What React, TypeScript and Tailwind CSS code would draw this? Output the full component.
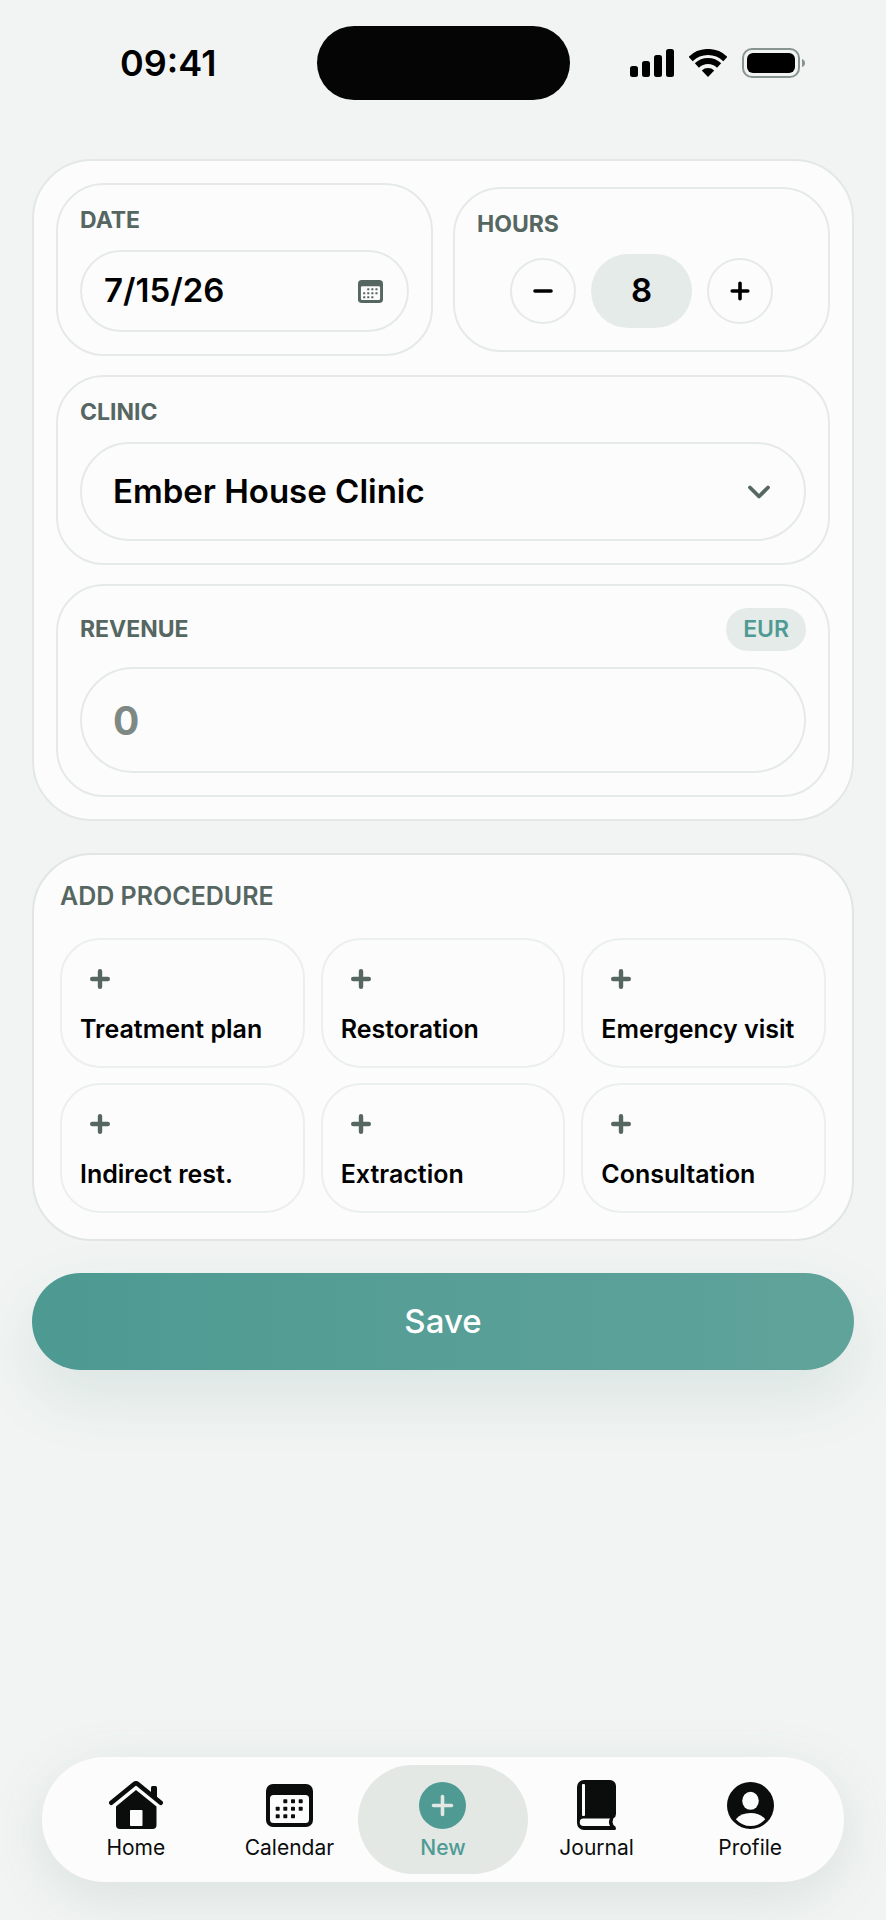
import { useState, type ReactNode } from "react";

const procedures = [
  "Treatment plan",
  "Restoration",
  "Emergency visit",
  "Indirect rest.",
  "Extraction",
  "Consultation",
];

function SignalIcon() {
  return (
    <svg width="44" height="28" viewBox="0 0 44 28" fill="currentColor" aria-hidden="true">
      <rect x="0" y="17" width="8" height="11" rx="2.5" />
      <rect x="12" y="12" width="8" height="16" rx="2.5" />
      <rect x="24" y="6" width="8" height="22" rx="2.5" />
      <rect x="36" y="0" width="8" height="28" rx="2.5" />
    </svg>
  );
}

function WifiIcon() {
  return (
    <svg width="38" height="28" viewBox="0 0 38 28" fill="none" aria-hidden="true">
      <path d="M1.6 10a25 25 0 0 1 34.8 0" stroke="currentColor" strokeWidth="6" />
      <path d="M7.9 16.5a16 16 0 0 1 22.2 0" stroke="currentColor" strokeWidth="6" />
      <path d="M19 28l-6.2-6.4a9 9 0 0 1 12.4 0z" fill="currentColor" />
    </svg>
  );
}

function BatteryIcon() {
  return (
    <svg width="63" height="30" viewBox="0 0 63 30" aria-hidden="true">
      <rect x="1" y="1" width="56" height="28" rx="9" fill="none" stroke="#87948f" strokeWidth="2" />
      <rect x="5" y="5" width="48" height="20" rx="6" fill="currentColor" />
      <path d="M60 11q3 1 3 4t-3 4z" fill="#87948f" />
    </svg>
  );
}

// `heavy` thickens the frame so the icon stays readable at small sizes
function CalendarIcon({ className, heavy = false }: { className?: string; heavy?: boolean }) {
  const dots = [
    [19.3, 17.3], [27, 17.3], [34.7, 17.3],
    [11.7, 24.8], [19.3, 24.8], [27, 24.8], [34.7, 24.8],
    [11.7, 32.3], [19.3, 32.3], [27, 32.3],
  ];
  return (
    <svg viewBox="0 0 47 43" className={className} fill="currentColor" aria-hidden="true">
      <rect width="47" height="43" rx="7" />
      {heavy ? (
        <rect x="5.5" y="11.5" width="36" height="26" rx="2.5" fill="#fcfcfc" />
      ) : (
        <rect x="4" y="11" width="39" height="28" rx="3.5" fill="#fcfcfc" />
      )}
      {dots.map(([x, y]) => (
        <rect key={`${x}-${y}`} x={x - 2} y={y - 2} width="4" height="4" rx="0.8" />
      ))}
    </svg>
  );
}

function HomeIcon() {
  return (
    <svg width="54" height="48" viewBox="0 0 54 48" fill="currentColor" aria-hidden="true">
      <path d="M2.3 21.7L25 3.2q2-1.6 4 0l22.7 18.5" fill="none" stroke="currentColor" strokeWidth="4.6" strokeLinecap="round" />
      <path d="M42 6.5q0-1.5 1.5-1.5h3q1.5 0 1.5 1.5V19l-6-5z" />
      <path d="M27 9l20.5 16.5V44a4 4 0 0 1-4 4H11a4 4 0 0 1-4-4V25.5z" />
      <rect x="21" y="29" width="12.5" height="16" rx="0.8" fill="#fcfcfc" />
    </svg>
  );
}

function NewIcon() {
  return (
    <svg width="47" height="47" viewBox="0 0 47 47" aria-hidden="true">
      <circle cx="23.5" cy="23.5" r="23.5" fill="currentColor" />
      <path d="M23.5 14.5v18M14.5 23.5h18" stroke="#e3e8e5" strokeWidth="3.6" strokeLinecap="round" />
    </svg>
  );
}

function JournalIcon() {
  return (
    <svg width="39" height="50" viewBox="0 0 39 50" aria-hidden="true">
      <path
        d="M7 0h26a6 6 0 0 1 6 6v28q0 3-2.6 4.2-1.6 3.3 0 6.8Q39 46 39 48.5q0 1.5-1.5 1.5H7a7 7 0 0 1-7-7V7a7 7 0 0 1 7-7z"
        fill="currentColor"
      />
      <rect x="5" y="4" width="3" height="32" rx="1" fill="#fcfcfc" />
      <path d="M6 38.5h27q-2.2 3.7 0 7.5H6.500a3.700 3.700 0 0 1 0-7.500z" fill="#fcfcfc" />
    </svg>
  );
}

function ProfileIcon() {
  return (
    <svg width="47" height="47" viewBox="0 0 47 47" aria-hidden="true">
      <circle cx="23.5" cy="23.5" r="23.5" fill="currentColor" />
      <ellipse cx="23.5" cy="18.8" rx="8.3" ry="9" fill="#fcfcfc" />
      <path d="M8.8 37.2Q14 31 23.5 31t14.7 6.2Q32 44 23.5 44T8.8 37.2z" fill="#fcfcfc" />
    </svg>
  );
}

function PlusIcon({ strokeWidth }: { strokeWidth: number }) {
  return (
    <svg width="20" height="20" viewBox="0 0 20 20" fill="none" stroke="currentColor" strokeWidth={strokeWidth} strokeLinecap="round" aria-hidden="true">
      <path d="M10 2.2v15.6M2.2 10h15.6" />
    </svg>
  );
}

function Field({ children }: { children: ReactNode }) {
  return (
    <div className="flex flex-col gap-4 rounded-[48px] border-2 border-[#e5eae8] p-[22px]">
      {children}
    </div>
  );
}

const labelClass = "text-[23px] leading-[27px] font-bold text-[#566661]";

function StatusBar() {
  return (
    <header className="grid grid-cols-[1fr_253px_1fr] items-center pt-[26px] text-black">
      <div className="pl-5 text-center text-4xl font-semibold">09:41</div>
      <div className="h-[74px] rounded-full bg-[#050505]" />
      <div className="flex items-center justify-center gap-[15px] pr-5">
        <SignalIcon />
        <WifiIcon />
        <BatteryIcon />
      </div>
    </header>
  );
}

const tabs = [
  { name: "Home", icon: <HomeIcon /> },
  { name: "Calendar", icon: <CalendarIcon className="h-[43px] w-[47px]" /> },
  { name: "New", icon: <NewIcon /> },
  { name: "Journal", icon: <JournalIcon /> },
  { name: "Profile", icon: <ProfileIcon /> },
];

function TabBar() {
  const active = "New";
  return (
    <nav className="mx-[42px] mt-auto grid grid-cols-5 rounded-full bg-[#fcfcfc] px-[17px] py-2 shadow-[0_14px_56px_rgba(70,110,95,0.13)]">
      {tabs.map((tab) => (
        <a
          key={tab.name}
          href={`#${tab.name.toLowerCase()}`}
          aria-current={tab.name === active ? "page" : undefined}
          className={
            tab.name === active
              ? "-mx-2 flex h-[109px] flex-col items-center rounded-full bg-[#e3e8e5] pt-[15px] text-[#4f9b94]"
              : "flex h-[109px] flex-col items-center pt-[15px] text-[#0b0d0c]"
          }
        >
          <span className="flex h-[50px] items-center">{tab.icon}</span>
          <span className={`mt-1.5 text-[21px] leading-6 ${tab.name === active ? "font-medium" : "font-normal"}`}>
            {tab.name}
          </span>
        </a>
      ))}
    </nav>
  );
}

export default function App() {
  const [date, setDate] = useState("7/15/26");
  const [hours, setHours] = useState(8);
  const [revenue, setRevenue] = useState("");

  return (
    <div className="flex min-h-screen flex-col bg-[#f1f4f3] pb-[38px] font-['Inter','Liberation_Sans',sans-serif] text-black">
      <StatusBar />

      <main className="mx-8 mt-[59px] mb-10 flex flex-col gap-8">
        <section className="flex flex-col gap-[19px] rounded-[60px] border-2 border-[#e3e8e6] bg-[#fcfcfc] p-[22px]">
          <div className="grid grid-cols-2 items-center gap-5">
            <Field>
              <label htmlFor="date" className={labelClass}>DATE</label>
              <div className="flex h-[82px] items-center rounded-full border-2 border-[#e5eae8] pr-6 pl-[22px]">
                <input
                  id="date"
                  value={date}
                  onChange={(e) => setDate(e.target.value)}
                  className="min-w-0 flex-1 bg-transparent text-[33px] font-semibold outline-none"
                />
                <button type="button" aria-label="Open calendar" className="text-[#566661]">
                  <CalendarIcon heavy className="h-[23px] w-[25px]" />
                </button>
              </div>
            </Field>

            <Field>
              <span id="hours-label" className={labelClass}>HOURS</span>
              <div role="group" aria-labelledby="hours-label" className="flex items-center justify-center gap-[15px]">
                <button
                  type="button"
                  aria-label="Less"
                  onClick={() => setHours(Math.max(0, hours - 1))}
                  className="flex size-[66px] items-center justify-center rounded-full border-2 border-[#e5eae8]"
                >
                  <svg width="20" height="20" viewBox="0 0 20 20" stroke="currentColor" strokeWidth="3.6" strokeLinecap="round" aria-hidden="true">
                    <path d="M2 10h16" />
                  </svg>
                </button>
                <output className="flex h-[74px] w-[101px] items-center justify-center rounded-full bg-[#e5ebe9] text-[33px] font-semibold">
                  {hours}
                </output>
                <button
                  type="button"
                  aria-label="More"
                  onClick={() => setHours(hours + 1)}
                  className="flex size-[66px] items-center justify-center rounded-full border-2 border-[#e5eae8]"
                >
                  <PlusIcon strokeWidth={3.6} />
                </button>
              </div>
            </Field>
          </div>

          <Field>
            <label htmlFor="clinic" className={labelClass}>CLINIC</label>
            <div className="relative">
              <select
                id="clinic"
                className="h-[99px] w-full appearance-none rounded-full border-2 border-[#e5eae8] bg-transparent px-[31px] text-[33px] font-semibold outline-none"
              >
                <option>Ember House Clinic</option>
              </select>
              <svg
                width="22"
                height="14"
                viewBox="0 0 22 14"
                fill="none"
                stroke="#566661"
                strokeWidth="3.8"
                strokeLinecap="round"
                strokeLinejoin="round"
                aria-hidden="true"
                className="pointer-events-none absolute inset-y-0 right-9 my-auto"
              >
                <path d="M2 2.5l9 9 9-9" />
              </svg>
            </div>
          </Field>

          <Field>
            <div className="flex items-center justify-between">
              <label htmlFor="revenue" className={labelClass}>REVENUE</label>
              <span className="rounded-full bg-[#e5ebe9] px-[17px] py-2 text-[23px] leading-[27px] font-semibold text-[#4f9b94]">EUR</span>
            </div>
            <input
              id="revenue"
              inputMode="decimal"
              placeholder="0"
              value={revenue}
              onChange={(e) => setRevenue(e.target.value)}
              className="h-[106px] w-full rounded-full border-2 border-[#e5eae8] bg-transparent px-[31px] text-[39px] font-bold outline-none placeholder:text-[#7e8884]"
            />
          </Field>
        </section>

        <section className="rounded-[60px] border-2 border-[#e1e6e4] bg-[#fcfcfc] p-[26px]">
          <h2 className="text-[25px] leading-[30px] font-semibold text-[#566661]">ADD PROCEDURE</h2>
          <div className="mt-[27px] grid grid-cols-3 gap-x-4 gap-y-[15px]">
            {procedures.map((name) => (
              <button
                key={name}
                type="button"
                className="flex h-[130px] flex-col items-start rounded-[40px] border-2 border-[#ebefee] px-[18px] pt-[19px] text-left"
              >
                <span className="flex size-10 items-center justify-center rounded-full text-[#566661]">
                  <PlusIcon strokeWidth={4.4} />
                </span>
                <span className="mt-4 text-[25px] leading-7 font-semibold whitespace-nowrap">{name}</span>
              </button>
            ))}
          </div>
        </section>

        <button
          type="button"
          className="h-[97px] rounded-full bg-linear-to-r from-[#4d9a92] to-[#60a39b] text-[33px] font-medium text-white shadow-[0_26px_64px_rgba(60,120,105,0.12)]"
        >
          Save
        </button>
      </main>

      <TabBar />
    </div>
  );
}
